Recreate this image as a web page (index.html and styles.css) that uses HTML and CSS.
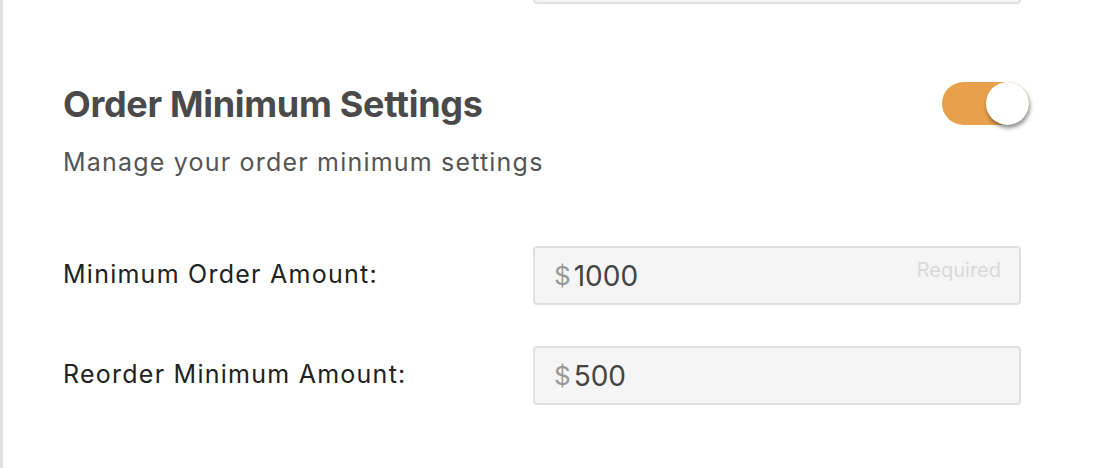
FILE: index.html
```html
<!DOCTYPE html>
<html lang="en">
<head>
    <meta charset="UTF-8">
    <meta name="viewport" content="width=device-width, initial-scale=1.0">
    <title>Order Minimum Settings</title>
    <link rel="stylesheet" href="styles.css">
</head>
<body>
    <div class="panel">
        <div class="field-row prev-row">
            <span></span>
            <div class="prev-input"></div>
        </div>

        <div class="section-head">
            <h2>Order Minimum Settings</h2>
            <label class="toggle">
                <input type="checkbox" checked>
                <span class="track"><span class="knob"></span></span>
            </label>
        </div>
        <p class="section-desc">Manage your order minimum settings</p>

        <div class="fields">
            <div class="field-row">
                <label for="min-order">Minimum Order Amount:</label>
                <div class="money-input">
                    <span class="currency">$</span>
                    <input id="min-order" type="text" value="1000">
                    <span class="hint">Required</span>
                </div>
            </div>
            <div class="field-row">
                <label for="reorder-min">Reorder Minimum Amount:</label>
                <div class="money-input">
                    <span class="currency">$</span>
                    <input id="reorder-min" type="text" value="500">
                </div>
            </div>
        </div>
    </div>
</body>
</html>
```

FILE: styles.css
```css
body {
    font-family: Inter, "Noto Sans", sans-serif;
    background-color: #fff;
    color: #222;
    margin: 0;
    padding: 0;
}
.panel {
    min-height: 468px;
    box-sizing: border-box;
    border-left: 3px solid #e0e0e0;
    padding: 0 65px 0 60px;
    width: 1094px;
}
.field-row {
    display: grid;
    grid-template-columns: 470px 488px;
    align-items: center;
}
.prev-row {
    height: 4px;
    align-items: start;
}
.prev-input {
    height: 2px;
    border: 2px solid #e0e0e0;
    border-top: none;
    border-radius: 0 0 4px 4px;
    background: #f5f5f5;
}
.section-head {
    display: flex;
    justify-content: space-between;
    align-items: flex-start;
    margin-top: 78px;
    width: 966px;
}
h2 {
    margin: 0;
    font-size: 36px;
    line-height: 44px;
    font-weight: 700;
    letter-spacing: -0.3px;
    color: #4a4a4a;
}
.toggle input {
    display: none;
}
.track {
    display: block;
    width: 87px;
    height: 43px;
    border-radius: 22px;
    background-color: #e8a04c;
    position: relative;
}
.knob {
    position: absolute;
    right: 0;
    top: 0;
    width: 43px;
    height: 43px;
    border-radius: 50%;
    background: #fff;
    box-shadow: 1px 3px 4px rgba(0, 0, 0, 0.45);
}
.section-desc {
    margin: 21px 0 0;
    font-size: 25px;
    line-height: 30px;
    letter-spacing: 1.2px;
    color: #555;
}
.fields {
    margin-top: 69px;
    display: flex;
    flex-direction: column;
    gap: 41px;
}
.field-row label {
    font-size: 25px;
    line-height: 30px;
    letter-spacing: 1.25px;
    color: #222;
    padding-bottom: 4px;
}
.money-input {
    display: flex;
    align-items: center;
    height: 59px;
    box-sizing: border-box;
    border: 2px solid #e0e0e0;
    border-radius: 4px;
    background: #f5f5f5;
    padding: 0 18px 0 19px;
}
.currency {
    font-size: 26px;
    color: #999;
    margin-right: 3px;
}
.money-input input {
    flex: 1;
    border: none;
    background: transparent;
    font-family: inherit;
    font-size: 28px;
    color: #444;
    padding: 0;
    outline: none;
    min-width: 0;
}
.hint {
    font-size: 20px;
    line-height: 24px;
    color: #dadada;
    align-self: flex-start;
    margin-top: 10px;
}
```
